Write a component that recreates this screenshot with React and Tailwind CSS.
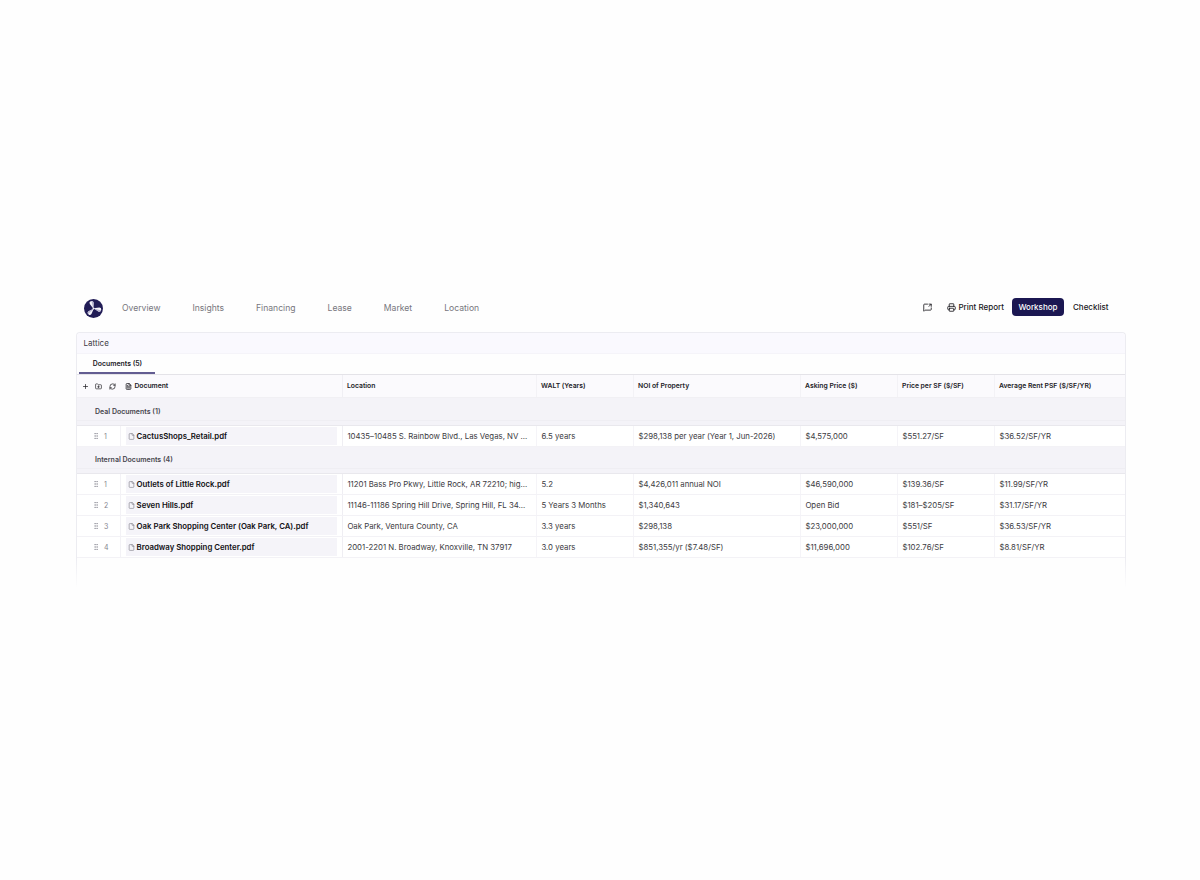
import { File, FileText, FolderPlus, GripVertical, MessageSquareShare, Plus, Printer, RefreshCw } from 'lucide-react';

const tabs = ['Overview', 'Insights', 'Financing', 'Lease', 'Market', 'Location'];

const columns = ['Location', 'WALT (Years)', 'NOI of Property', 'Asking Price ($)', 'Price per SF ($/SF)', 'Average Rent PSF ($/SF/YR)'];

const dealDocs = [
  {
    name: 'CactusShops_Retail.pdf',
    cells: ['10435–10485 S. Rainbow Blvd., Las Vegas, NV ...', '6.5 years', '$298,138 per year (Year 1, Jun-2026)', '$4,575,000', '$551.27/SF', '$36.52/SF/YR'],
  },
];

const internalDocs = [
  {
    name: 'Outlets of Little Rock.pdf',
    cells: ['11201 Bass Pro Pkwy, Little Rock, AR 72210; hig...', '5.2', '$4,426,011 annual NOI', '$46,590,000', '$139.36/SF', '$11.99/SF/YR'],
  },
  {
    name: 'Seven Hills.pdf',
    cells: ['11146-11186 Spring Hill Drive, Spring Hill, FL 34...', '5 Years 3 Months', '$1,340,643', 'Open Bid', '$181–$205/SF', '$31.17/SF/YR'],
  },
  {
    name: 'Oak Park Shopping Center (Oak Park, CA).pdf',
    cells: ['Oak Park, Ventura County, CA', '3.3 years', '$298,138', '$23,000,000', '$551/SF', '$36.53/SF/YR'],
  },
  {
    name: 'Broadway Shopping Center.pdf',
    cells: ['2001-2201 N. Broadway, Knoxville, TN 37917', '3.0 years', '$851,355/yr ($7.48/SF)', '$11,696,000', '$102.76/SF', '$8.81/SF/YR'],
  },
];

const grid = 'grid grid-cols-[44px_222px_194px_97px_167px_97px_97px_130px]';

function Logo() {
  return (
    <svg width="19" height="19" viewBox="0 0 38 38">
      <circle cx="19" cy="19" r="19" fill="#211c56" />
      {[-14, 106, 226].map((deg) => (
        <g key={deg} transform={`rotate(${deg} 19 19)`}>
          <path d="M18.5 19 L14 8.5 Q13 4 17 3.5 Q22.5 3.5 22 8 Z" fill="#f4f3fa" />
          <path d="M18.5 19 L18.5 3.5 Q22.5 4 22 8 Z" fill="#b9b6d2" />
        </g>
      ))}
      <circle cx="19" cy="19" r="1.8" fill="#f4f3fa" />
    </svg>
  );
}

function GroupRow({ label, className }) {
  return (
    <div className={`bg-[#f4f3f8] border-b border-[#e9e8ed] flex flex-col ${className}`}>
      <div className="flex-1 border-b border-[#efeef3] pl-[18px] pt-[5px] flex items-center">
        <span className="text-[7px] leading-[10px] font-semibold text-[#47464e]">{label}</span>
      </div>
      <div className="h-[4px]" />
    </div>
  );
}

function DocRow({ index, doc }) {
  return (
    <div className={`${grid} h-[21px] border-b border-[#f3f2f6] bg-white`}>
      <div className="flex items-center pl-[15px] border-r border-[#f3f2f6] text-[#85848d]">
        <GripVertical size={8} strokeWidth={1.6} />
        <span className="ml-[4px] pt-[2px] text-[7px] leading-[10px]">{index}</span>
      </div>
      <div className="py-px pl-[5px] pr-[5px] border-r border-[#efeef3]">
        <div className="h-full bg-[#f5f4f9] flex items-center pl-[2px]">
          <File size={7} strokeWidth={2} className="text-[#77767f] shrink-0" />
          <span className="ml-[1.6px] text-[7.8px] leading-[12px] font-semibold text-[#111014] whitespace-nowrap">{doc.name}</span>
        </div>
      </div>
      {doc.cells.map((cell, i) => (
        <div key={columns[i]} className="flex items-center pl-[4.4px] border-r border-[#f5f4f8] last:border-r-0">
          <span className="text-[7.8px] leading-[12px] text-[#3c3b42] whitespace-nowrap">{cell}</span>
        </div>
      ))}
    </div>
  );
}

export default function App() {
  return (
    <div className="h-[880px] w-[1200px] overflow-hidden bg-[#fefefe] pt-[298px] pl-[77px] font-[Inter,sans-serif]">
      {/* Top navigation */}
      <header className="h-[20px] w-[1049px] flex items-center justify-between">
        <div className="flex items-center pl-[7px]">
          <Logo />
          <nav className="ml-[19px] flex gap-[32px]">
            {tabs.map((tab) => (
              <a key={tab} className="text-[8.6px] leading-[12px] text-[#77767d]">{tab}</a>
            ))}
          </nav>
        </div>
        <div className="flex items-center pb-[2px] text-[8px] leading-[12px] font-medium text-[#18171c]">
          <MessageSquareShare size={9} strokeWidth={2.2} />
          <button className="ml-[15px] flex items-center gap-[2px]">
            <Printer size={9} strokeWidth={2.2} />
            Print Report
          </button>
          <button className="ml-[8px] h-[18px] w-[52px] rounded-[4px] bg-[#1b1752] text-white">Workshop</button>
          <button className="ml-[9px] mr-[17.5px]">Checklist</button>
        </div>
      </header>

      {/* Lattice panel */}
      <section className="mt-[14px] w-[1050px] -ml-px">
        <div className="border-x border-t border-[#ececf1] rounded-t-[4px]">
          <div className="h-[21px] bg-[#faf9fe] border-b border-[#f5f4f9] rounded-t-[4px] pl-[6.6px] flex items-center text-[8px] text-[#3c3b42]">
            Lattice
          </div>
          <div className="h-[21px] flex border-b border-[#e4e3e8]">
            <div className="ml-[2px] w-[76px] h-[20px] border-b-2 border-[#625c91] flex items-center justify-center pt-[2px] pl-px text-[6.9px] font-semibold text-[#222127]">
              Documents (5)
            </div>
          </div>

          <div className={`${grid} h-[23px] bg-[#fbfafd] border-b border-[#f1f0f4] text-[6.8px] font-semibold text-[#222127]`}>
            <div className="col-span-2 flex items-center pl-[5px] border-r border-[#f0eff4]">
              <Plus size={7} strokeWidth={2.5} />
              <FolderPlus size={7} strokeWidth={2.3} className="ml-[6px]" />
              <RefreshCw size={7} strokeWidth={2.5} className="ml-[7px]" />
              <FileText size={7} strokeWidth={2.7} className="ml-[9px]" />
              <span className="ml-[2.4px] pt-px">Document</span>
            </div>
            {columns.map((col) => (
              <div key={col} className="flex items-center pl-[4px] pt-px border-r border-[#f3f2f6] last:border-r-0 whitespace-nowrap">
                {col}
              </div>
            ))}
          </div>

          <GroupRow label="Deal Documents (1)" className="h-[28px]" />
          {dealDocs.map((doc, i) => <DocRow key={doc.name} index={i + 1} doc={doc} />)}
          <GroupRow label="Internal Documents (4)" className="h-[27px]" />
          {internalDocs.map((doc, i) => <DocRow key={doc.name} index={i + 1} doc={doc} />)}
        </div>

        {/* Side borders fading out below the last row */}
        <div className="h-[30px] flex justify-between">
          <div className="w-px bg-linear-to-b from-[#ececf1] to-transparent" />
          <div className="w-px bg-linear-to-b from-[#ececf1] to-transparent" />
        </div>
      </section>
    </div>
  );
}
